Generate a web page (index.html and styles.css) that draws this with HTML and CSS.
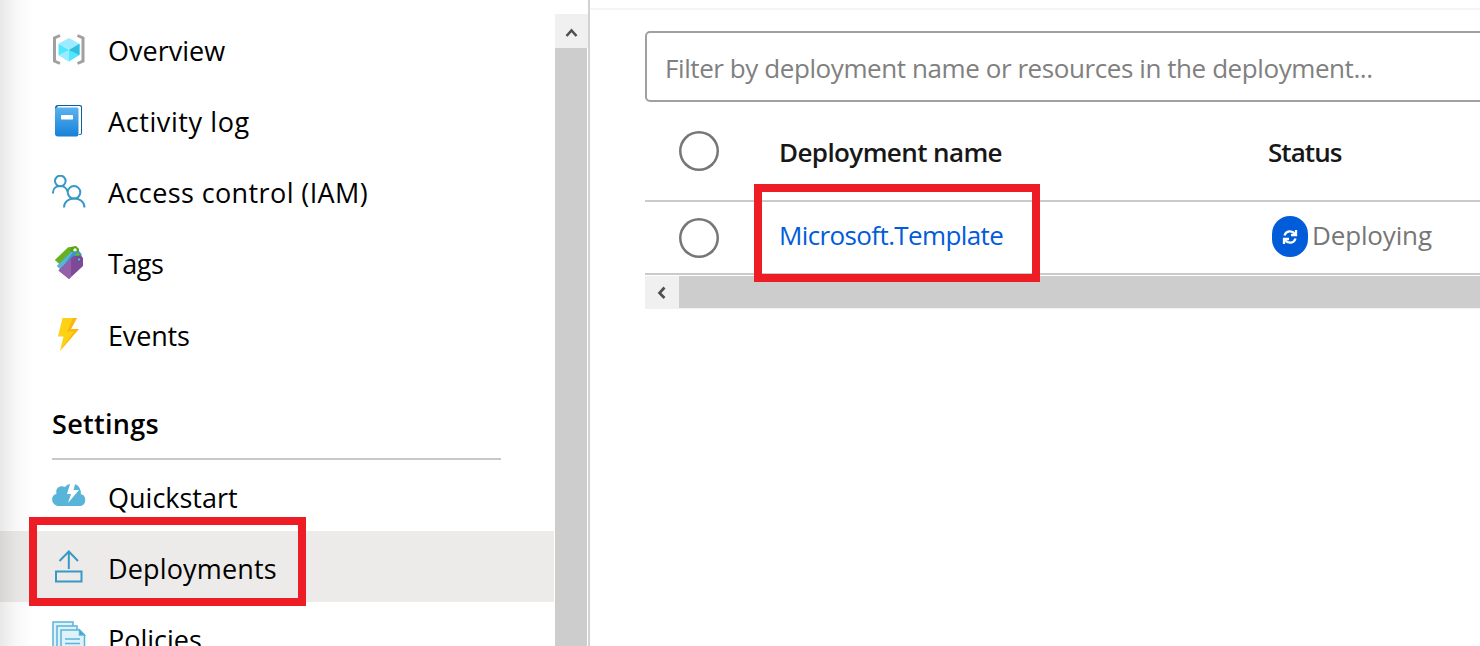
FILE: index.html
```html
<!DOCTYPE html>
<html lang="en">
<head>
<meta charset="utf-8">
<title>Deployments</title>
<link rel="stylesheet" href="styles.css">
</head>
<body>
<div class="app">
  <aside class="sidebar">
    <nav class="menu primary">
      <a class="item"><svg class="icon" viewBox="0 0 34 34"><path d="M8 2.500 2.500 5v23L8 30.500M25.500 2.500 31 5v23l-5.500 2.500" fill="none" stroke="#a0a0a0" stroke-width="3"/><path d="m17 5 10.500 5.800L17 17 6.500 10.800z" fill="#9cebff"/><path d="M6.500 10.800 17 17v11.500L6.500 22z" fill="#50e6ff"/><path d="M27.500 10.800 17 17v11.500L27.500 22z" fill="#50e6ff"/><path d="M27.500 10.800 17 17l10.500 5z" fill="#32bedd"/><path d="M6.500 22 17 17v11.500z" fill="#9cebff"/></svg><span class="label overview">Overview</span></a>
      <a class="item"><svg class="icon" viewBox="0 0 34 34"><defs><linearGradient id="book" x2="0" y2="1"><stop stop-color="#5ab3f0"/><stop offset="1" stop-color="#1580d8"/></linearGradient></defs><path d="M6 1h22q2 0 2 2v26q0 2-2 2H6q-3 0-3-3V4q0-3 3-3z" fill="#0c5f9c"/><path d="M6 2h21.500q1.500 0 1.500 1.500v26L26 31V5H4z" fill="#fff"/><path d="M4 3.500h21q1.500 0 1.500 1.500v25q0 2.500-2 2.500H6Q3 32.500 3 29.500V4.500z" fill="url(#book)"/><rect x="9" y="11" width="12" height="4.500" rx=".7" fill="#fff"/></svg><span class="label activity">Activity log</span></a>
      <a class="item"><svg class="icon" viewBox="0 0 34 34" fill="none" stroke="#3999c6" stroke-width="2"><circle cx="8.300" cy="6" r="5.300"/><circle cx="22" cy="17.300" r="6.300"/><path d="M1 18.500v-1c0-8.500 13-8.500 14.500-1M12 32.500c0-12 20.500-12 20.500 0"/></svg><span class="label access">Access control (IAM)</span></a>
      <a class="item"><svg class="icon" viewBox="0 0 34 34"><path d="M3 14 16 1.500 24 0l3 3v11L14 24z" fill="#59a30d"/><path d="m3 14 13-12.500 3-.5-1 8L9 19z" fill="#76bc2d" opacity=".55"/><circle cx="23" cy="4" r="1.700" fill="#fff"/><path d="M5 20 19 6l8-1 2.500 3v11L16 29z" fill="#3999c6"/><path d="m5 20 14-14 2-.3L9 24z" fill="#59b4d9"/><circle cx="25.500" cy="8.800" r="1.700" fill="#7fba00"/><path d="m6.500 24.500 15-14.500 7.500-.5L31 12v8L17 33z" fill="#804998"/><path d="m6.500 24.500 12.500-12V31l-2 2z" fill="#9460a9"/><circle cx="27" cy="13.500" r="1.800" fill="#59b4d9" stroke="#4b3b8f" stroke-width=".7"/></svg><span class="label tags">Tags</span></a>
      <a class="item"><svg class="icon" viewBox="0 0 34 34"><path d="M10.500 0H25l-6 11h8L8 33l3.500-14.500H6z" fill="#fcd116"/><path d="M21 0h4l-6 11h8L8 33l14-19.500h-7z" fill="#ff8c00" opacity=".38"/></svg><span class="label events">Events</span></a>
    </nav>
    <h2 class="section"><span class="settings">Settings</span></h2>
    <nav class="menu">
      <a class="item"><svg class="icon cloud" viewBox="0 0 34 34"><path d="M7.500 27C-1.500 27-2 15.500 4.500 15 3 9 8 5.500 13 8c4-5 13-4 15 2 1 2 1 4 .8 5.300 6 .3 6.200 11.700-1.300 11.700z" fill="#59b4d9"/><path d="M18.500 3.500h5L21.500 11H27L16 24l3-9h-4z" fill="#fff"/></svg><span class="label quickstart">Quickstart</span></a>
      <a class="item selected"><svg class="icon" viewBox="0 0 34 34" fill="none" stroke="#3999c6" stroke-width="2"><path d="M4 21.500h25.500v10H4zM16.800 19V2M7.500 11l9.300-9.500L26 11"/></svg><span class="label deployments">Deployments</span></a>
      <a class="item"><svg class="icon policy" viewBox="0 0 34 34" fill="#dff2f9" stroke="#59b4d9" stroke-width="1.500"><path d="M1 1h20v27H1z"/><path d="M5 5h20v27H5z"/><path d="M9 9h18.500l5 5v20H9z"/><path d="M27.500 9v5h5z" fill="#3999c6"/><path d="M13 18h15M13 22.500h15"/></svg><span class="label policies">Policies</span></a>
    </nav>
    <div class="edge-shadow"></div>
    <div class="callout callout-menu"></div>
  </aside>
  <div class="vbar"><div class="vbutton"><svg width="14" height="11" viewBox="0 0 14 11"><path d="m1.500 10 5-5.500 5 5.500" fill="none" stroke="#505050" stroke-width="2.600"/></svg></div><div class="vthumb"></div></div>
  <main class="main">
    <div class="toolbar-line"></div>
    <div class="filter"><span class="filter-text">Filter by deployment name or resources in the deployment...</span></div>
    <div class="row head"><i class="radio"></i><b class="name dname">Deployment name</b><b class="status stat">Status</b></div>
    <div class="row data"><i class="radio"></i><a class="name link">Microsoft.Template</a><div class="status"><span class="badge"><svg width="16" height="16" viewBox="0 0 16 16" fill="none" stroke="#fff" stroke-width="2.300"><path d="M2.500 6.500C4 1.500 10 1 13 5M13.500 9.500C12 14.500 6 15 3 11"/><path d="M14 1v5H9M2 15v-5h5"/></svg></span><span class="deploying">Deploying</span></div><div class="callout callout-row"></div></div>
    <div class="hbar"><div class="hbutton"><svg width="12" height="13" viewBox="0 0 12 13"><path d="M8.500 1.500 3.500 7l5 5" fill="none" stroke="#505050" stroke-width="2.700"/></svg></div><div class="hthumb"></div></div>
  </main>
</div>
</body>
</html>
```
FILE: styles.css
```css
* { box-sizing: border-box; }
body { margin: 0; background: #fff; font-family: "Open Sans", "Noto Sans", sans-serif; font-size: 27px; color: #000; overflow: hidden; }
.app { display: grid; grid-template-columns: 555px 35px 1fr; height: 646px; overflow: hidden; }
.sidebar { position: relative; padding-top: 12.500px; height: 646px; overflow: hidden; }
.item { display: flex; align-items: center; height: 71.250px; padding-left: 52px; gap: 22px; }
.icon { width: 34px; height: 34px; flex: none; }
.primary .icon { margin-top: 3px; }
.policy { margin-top: 2px; }
.label { line-height: 36px; padding-top: 5px; white-space: nowrap; }
.activity { letter-spacing: .6px; }
.access { letter-spacing: .4px; }
.tags { letter-spacing: -.5px; }
.events { letter-spacing: -.15px; }
.settings { letter-spacing: .3px; }
.deployments { letter-spacing: .15px; }
.selected { background: #edebe9; margin-right: 1px; height: 70.500px; }
.policies { padding-top: 6px; }
.section { margin: 0 54px 0 52px; height: 91.250px; padding-top: 37px; border-bottom: 2px solid #c8c8c8; font-size: 27px; line-height: 36px; font-weight: 600; }
.edge-shadow { position: absolute; left: 0; top: 0; width: 34px; height: 646px; background: linear-gradient(to right, rgba(0,0,0,.09), rgba(0,0,0,.03) 45%, transparent); }
.callout { position: absolute; border: 8px solid #ee1c25; }
.callout-menu { left: 29px; top: 517px; width: 277px; height: 89px; }
.vbar { display: flex; flex-direction: column; padding: 14px 0 0; border-right: 2px solid #d2d2d2; }
.vbutton { height: 34px; background: #f0f0f0; display: grid; place-items: center; }
.vthumb { flex: 1; width: 32px; background: #cdcdcd; }
.main { padding-top: 8px; overflow: hidden; }
.toolbar-line { height: 2px; background: #f5f5f5; margin-bottom: 21px; }
.filter { height: 71px; margin-left: 55px; margin-right: -10px; border: 2px solid #a0a0a0; border-radius: 5px; padding: 17px 18px; color: #808080; font-size: 26px; line-height: 36px; white-space: nowrap; letter-spacing: -.42px; }
.row { position: relative; margin-left: 55px; display: grid; grid-template-columns: 134px 489px 1fr; align-items: center; border-bottom: 2px solid #cacaca; font-size: 26px; line-height: 36px; white-space: nowrap; }
.head { height: 100px; font-weight: 600; color: #171717; }
.head b { font-weight: 600; padding-top: 1px; letter-spacing: -.6px; }
.head .stat { letter-spacing: -.95px; }
.data { height: 73px; }
.radio { width: 40px; height: 40px; margin-left: 34px; border-radius: 50%; box-shadow: inset 0 0 0 2.500px #767676; }
.link { color: #015cda; letter-spacing: -.62px; padding-bottom: 5px; }
.status { display: flex; align-items: center; }
.data .status { padding-bottom: 2px; }
.badge { width: 36px; height: 41px; margin: 0 4px 0 4px; border-radius: 18px; background: #015cda; display: grid; place-items: center; }
.deploying { color: #767676; letter-spacing: -.15px; padding-bottom: 3px; }
.callout-row { left: 109px; top: -18px; width: 286px; height: 98px; z-index: 1; }
.hbar { display: flex; height: 33px; margin: 1px 0 0 55px; background: #f0f0f0; }
.hbutton { width: 34px; display: grid; place-items: center; }
.hthumb { flex: 1; height: 32px; background: #cdcdcd; }
```
